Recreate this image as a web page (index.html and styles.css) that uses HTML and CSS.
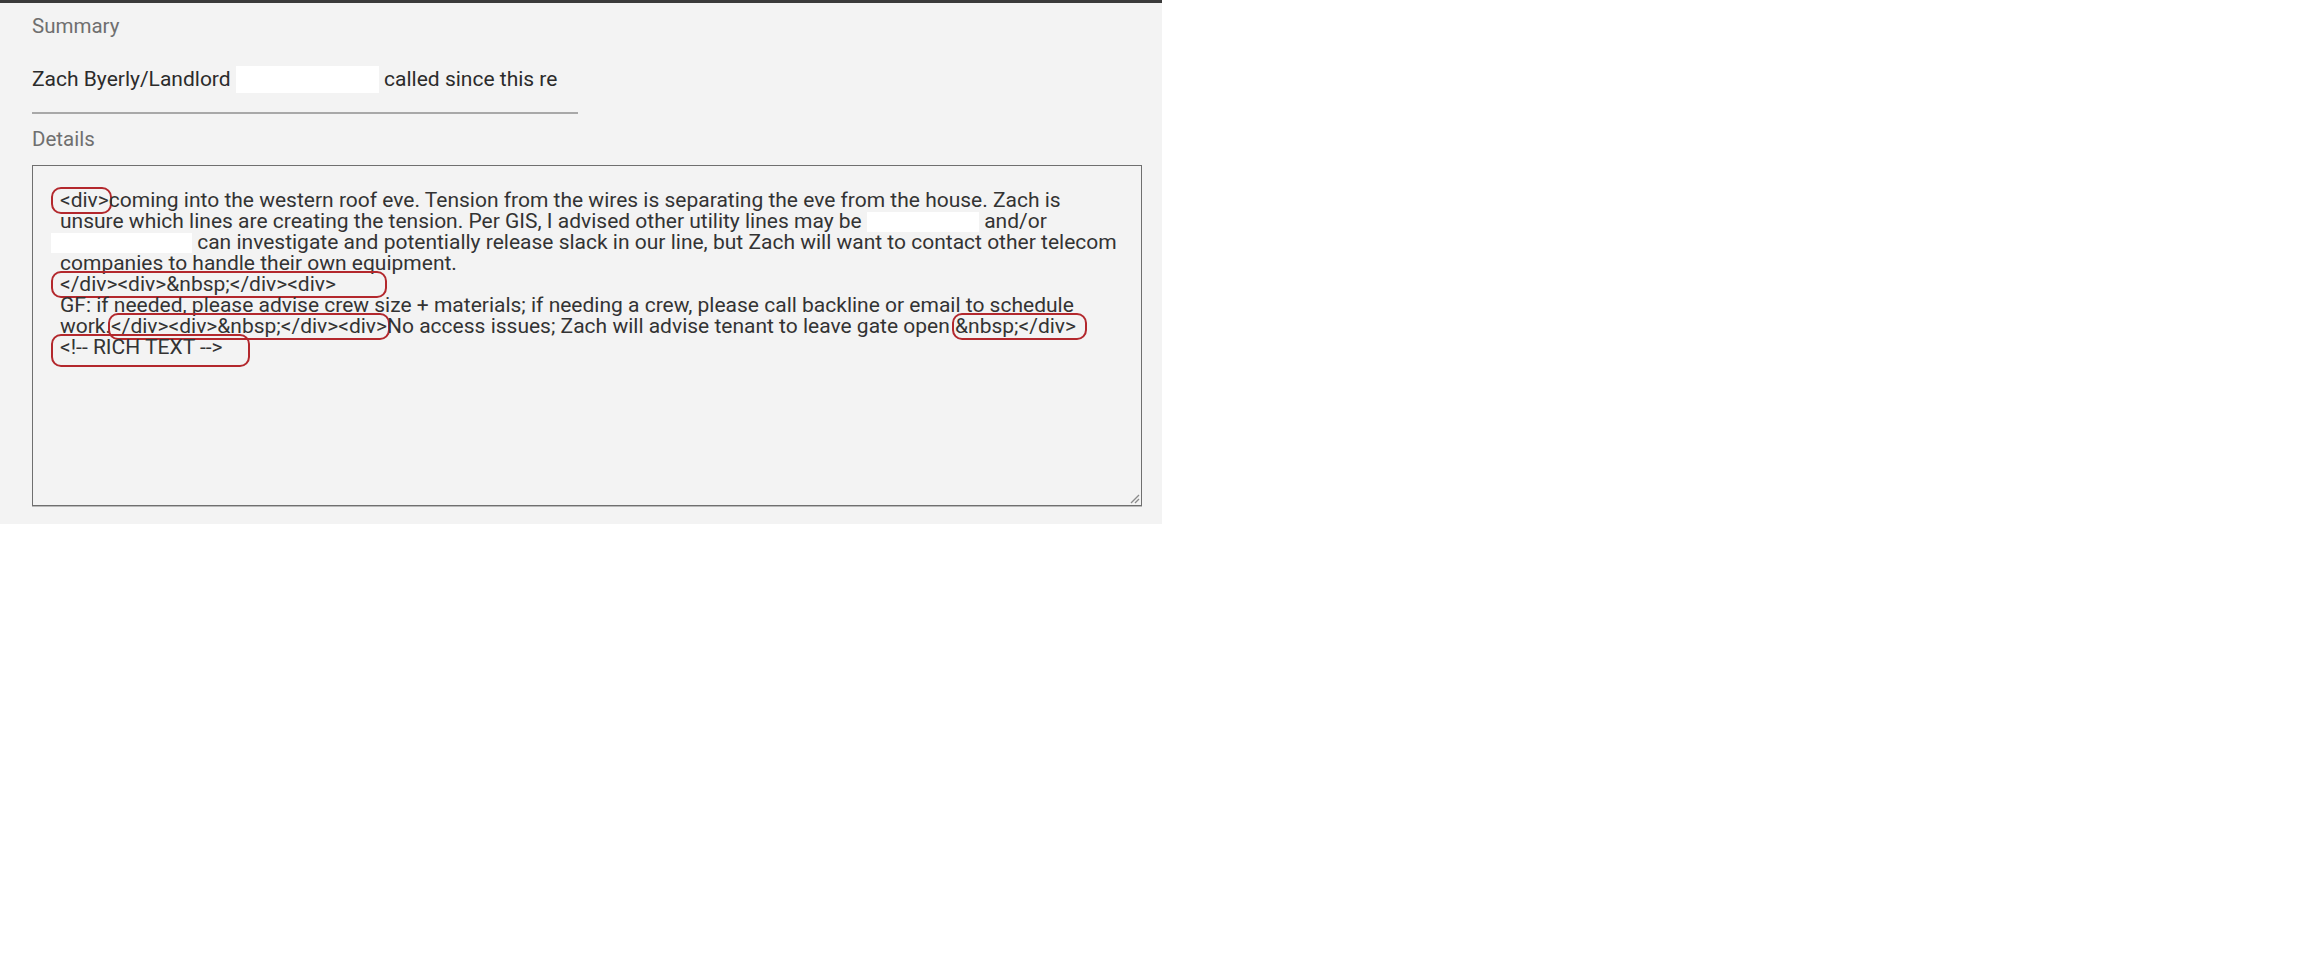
FILE: index.html
```html
<!DOCTYPE html>
<html lang="en">
<head>
  <meta charset="UTF-8" />
  <title>Case Details</title>
  <link rel="stylesheet" href="styles.css">
</head>
<body>
  <div class="panel">
    <div class="field">
      <label class="field-label">Summary</label>
      <div class="summary-input">Zach Byerly/Landlord <span class="redact redact-summary"></span> called since this re</div>
    </div>

    <div class="field">
      <label class="field-label">Details</label>
      <div class="details-box">
<div class="details-text"><span class="mark mark-lead">&lt;div&gt;</span>coming into the western roof eve. Tension from the wires is separating the eve from the house. Zach is
unsure which lines are creating the tension. Per GIS, I advised other utility lines may be <span class="redact redact-mid"></span> and/or
<span class="redact redact-start"></span> can investigate and potentially release slack in our line, but Zach will want to contact other telecom
companies to handle their own equipment.
<span class="mark mark-lead mark-wide">&lt;/div&gt;&lt;div&gt;&amp;nbsp;&lt;/div&gt;&lt;div&gt;</span>
GF: if needed, please advise crew size + materials; if needing a crew, please call backline or email to schedule
work.<span class="mark">&lt;/div&gt;&lt;div&gt;&amp;nbsp;&lt;/div&gt;&lt;div&gt;</span>No access issues; Zach will advise tenant to leave gate open <span class="mark mark-tail">&amp;nbsp;&lt;/div&gt;</span>
<span class="mark mark-lead mark-comment">&lt;!-- RICH TEXT --&gt;</span></div>
        <svg class="resize-grip" width="12" height="12" viewBox="0 0 12 12">
          <line x1="11" y1="3" x2="3" y2="11" stroke="#8a8a8a" stroke-width="1.2"/>
          <line x1="11" y1="7" x2="7" y2="11" stroke="#8a8a8a" stroke-width="1.2"/>
        </svg>
      </div>
    </div>
  </div>
</body>
</html>
```

FILE: styles.css
```css
body {
  margin: 0;
  background: #fff;
  font-family: Roboto, "Liberation Sans", sans-serif;
}

.panel {
  width: 1162px;
  height: 524px;
  box-sizing: border-box;
  background: #f3f3f3;
  border-top: 3px solid #3a3a3a;
  padding: 11px 20px 0 32px;
}

.field {
  display: flex;
  flex-direction: column;
}

.field-label {
  font-size: 20.5px;
  line-height: 24px;
  color: #6f6f6f;
}

.summary-input {
  width: 546px;
  margin-top: 28px;
  padding-bottom: 19px;
  font-size: 21px;
  line-height: 24px;
  color: #2b2b2b;
  border-bottom: 2px solid #a8a8a8;
}

.field + .field {
  margin-top: 13px;
}

.details-box {
  position: relative;
  width: 1110px;
  height: 341px;
  box-sizing: border-box;
  margin-top: 14px;
  border: 1px solid #6f6f6f;
  box-shadow: 0 1px 0 #b9b9b9;
  padding: 24px 20px 0 27px;
}

.details-text {
  white-space: pre;
  font-size: 21px;
  line-height: 21px;
  color: #333;
}

.redact {
  display: inline-block;
  background: #fff;
  height: 20px;
  vertical-align: -4px;
}

.redact-summary {
  width: 143px;
  height: 27px;
  vertical-align: -7px;
}

.redact-mid {
  width: 112px;
}

.redact-start {
  width: 141px;
  margin-left: -9px;
}

.mark {
  display: inline-block;
  height: 21px;
  outline: 2px solid #b3282d;
  outline-offset: 1px;
  border-radius: 7px;
}

.mark-lead {
  margin-left: -6px;
  padding-left: 6px;
}

.mark-wide {
  padding-right: 48px;
}

.mark-tail {
  padding-right: 8px;
}

.mark-comment {
  padding-right: 24px;
  padding-bottom: 6px;
}

.resize-grip {
  position: absolute;
  right: 1px;
  bottom: 1px;
}
```
